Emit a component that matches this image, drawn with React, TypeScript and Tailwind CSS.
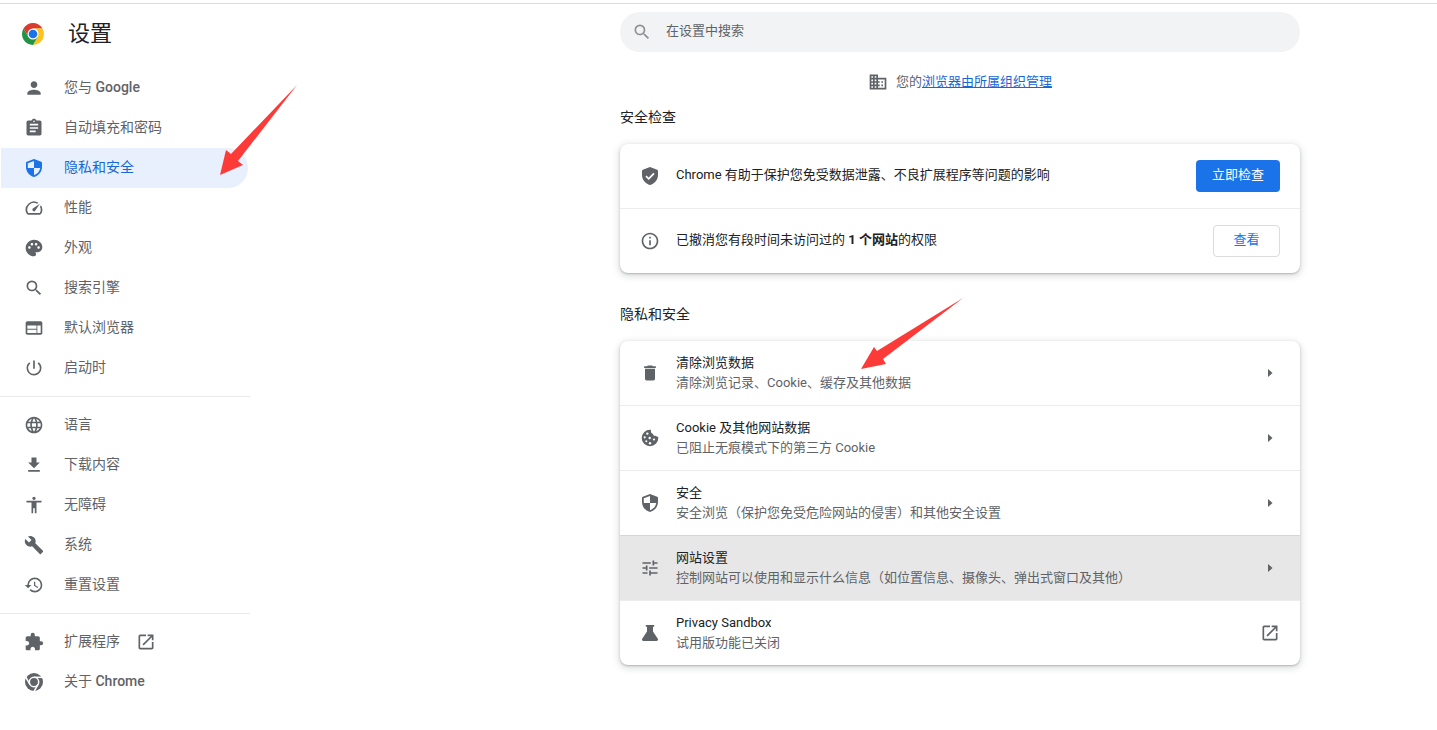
import type { ComponentType, ReactNode } from 'react';
import {
  MdAccessibility,
  MdAssignment,
  MdBuild,
  MdBusiness,
  MdDelete,
  MdExtension,
  MdFileDownload,
  MdHistory,
  MdInfoOutline,
  MdLanguage,
  MdOpenInNew,
  MdOutlineSpeed,
  MdPalette,
  MdPerson,
  MdPowerSettingsNew,
  MdSearch,
  MdTune,
  MdWeb,
} from 'react-icons/md';

type Icon = ComponentType<{ className?: string }>;

interface NavItem {
  label: ReactNode;
  icon: Icon;
  active?: boolean;
  external?: boolean;
}

interface PrivacyItem {
  title: string;
  description: string;
  icon: Icon;
  hovered?: boolean;
  external?: boolean;
}

function ShieldIcon({ className }: { className?: string }) {
  return (
    <svg viewBox="0 0 20 20" fill="currentColor" className={className} aria-hidden="true">
      <path
        fillRule="evenodd"
        d="M10 1 2.8 3.7c-.5.2-.8.6-.8 1.1V9c0 4.7 3.3 8.700 8 10 4.700-1.300 8-5.300 8-10V4.800c0-.5-.3-.9-.8-1.100L10 1zm0 1.900V10h6.200c-.4 3.300-2.800 6-6.200 7.200V10H3.800V5.200L10 2.900z"
      />
    </svg>
  );
}

function ShieldCheckIcon({ className }: { className?: string }) {
  return (
    <svg viewBox="0 0 20 20" className={className} aria-hidden="true">
      <path
        fill="currentColor"
        d="M10 1 2.800 3.700c-.5.2-.8.6-.8 1.100V9c0 4.700 3.300 8.700 8 10 4.700-1.300 8-5.300 8-10V4.800c0-.5-.3-.9-.8-1.100L10 1z"
      />
      <path d="m6 10.200 2.700 2.600L14 7.400" fill="none" stroke="#fff" strokeWidth="1.700" />
    </svg>
  );
}

function CookieIcon({ className }: { className?: string }) {
  return (
    <svg viewBox="0 0 20 20" className={className} aria-hidden="true">
      <path
        fill="currentColor"
        d="M10 1.700a8.300 8.300 0 1 0 8.300 8.300c0-.5 0-.9-.1-1.300-.9.200-1.900-.1-2.400-.9-1.400.4-2.700-.5-2.700-1.900-1.500-.3-2.600-1.700-2.100-3.200.1-.4 0-1-1-1z"
      />
      <g fill="#fff">
        <circle cx="7.300" cy="5.600" r="1.200" />
        <circle cx="4.700" cy="9.300" r="1.100" />
        <circle cx="9.700" cy="10" r="1.200" />
        <circle cx="6.300" cy="13.300" r="1" />
        <circle cx="14" cy="11.500" r="1.100" />
        <circle cx="10" cy="15.300" r="1.200" />
      </g>
    </svg>
  );
}

function FlaskIcon({ className }: { className?: string }) {
  return (
    <svg viewBox="0 0 20 20" fill="currentColor" className={className} aria-hidden="true">
      <path d="M5.800 2h8.400v1.800H13v4.700l4.800 7.300c.6 1-.1 2.200-1.200 2.200H3.400c-1.100 0-1.800-1.200-1.200-2.200L7 8.500V3.800H5.800V2z" />
    </svg>
  );
}

function ChromeIcon({ className }: { className?: string }) {
  return (
    <svg viewBox="0 0 20 20" className={className} aria-hidden="true">
      <circle cx="10" cy="10" r="9" fill="currentColor" />
      <circle cx="10" cy="10" r="4.700" fill="none" stroke="#fff" strokeWidth="1.500" />
      <g stroke="#fff" strokeWidth="1.500">
        <path d="M10 5.300h9" />
        <path d="M10 5.300h9" transform="rotate(120 10 10)" />
        <path d="M10 5.300h9" transform="rotate(240 10 10)" />
      </g>
    </svg>
  );
}

function ChromeLogo({ className }: { className?: string }) {
  return (
    <svg viewBox="2 2 44 44" className={className} aria-hidden="true">
      <path d="M4.950 13a22 22 0 0 1 38.100 0H24l-9.530 16.500z" fill="#db3a2f" />
      <path d="M43.050 13A22 22 0 0 1 24 46l9.530-16.500L24 13z" fill="#fcc31e" />
      <path d="M24 46A22 22 0 0 1 4.950 13l9.520 16.500h19.060z" fill="#229342" />
      <circle cx="24" cy="24" r="11" fill="#fff" />
      <circle cx="24" cy="24" r="8.700" fill="#1a73e8" />
    </svg>
  );
}

const primaryNav: NavItem[] = [
  { label: <>您与 <span className="font-medium">Google</span></>, icon: MdPerson },
  { label: '自动填充和密码', icon: MdAssignment },
  { label: '隐私和安全', icon: ShieldIcon, active: true },
  { label: '性能', icon: MdOutlineSpeed },
  { label: '外观', icon: MdPalette },
  { label: '搜索引擎', icon: MdSearch },
  { label: '默认浏览器', icon: MdWeb },
  { label: '启动时', icon: MdPowerSettingsNew },
];

const advancedNav: NavItem[] = [
  { label: '语言', icon: MdLanguage },
  { label: '下载内容', icon: MdFileDownload },
  { label: '无障碍', icon: MdAccessibility },
  { label: '系统', icon: MdBuild },
  { label: '重置设置', icon: MdHistory },
];

const aboutNav: NavItem[] = [
  { label: '扩展程序', icon: MdExtension, external: true },
  { label: <>关于 <span className="font-medium">Chrome</span></>, icon: ChromeIcon },
];

const privacyItems: PrivacyItem[] = [
  { title: '清除浏览数据', description: '清除浏览记录、Cookie、缓存及其他数据', icon: MdDelete },
  { title: 'Cookie 及其他网站数据', description: '已阻止无痕模式下的第三方 Cookie', icon: CookieIcon },
  { title: '安全', description: '安全浏览（保护您免受危险网站的侵害）和其他安全设置', icon: ShieldIcon },
  {
    title: '网站设置',
    description: '控制网站可以使用和显示什么信息（如位置信息、摄像头、弹出式窗口及其他）',
    icon: MdTune,
    hovered: true,
  },
  { title: 'Privacy Sandbox', description: '试用版功能已关闭', icon: FlaskIcon, external: true },
];

function NavGroup({ items }: { items: NavItem[] }) {
  return (
    <ul>
      {items.map(({ label, icon: ItemIcon, active, external }, i) => (
        <li key={i}>
          <a
            href="#"
            aria-current={active ? 'page' : undefined}
            className={`ml-px mr-0.5 flex h-10 items-center rounded-r-full pl-[23px] text-sm ${
              active ? 'bg-[#e8f0fe] text-[#1967d2]' : 'text-[#5f6368]'
            }`}
          >
            <ItemIcon className={`mr-5 size-5 shrink-0 ${active ? 'text-[#1a73e8]' : ''}`} />
            <span className="pb-0.5">{label}</span>
            {external && <MdOpenInNew className="ml-4 size-5" />}
          </a>
        </li>
      ))}
    </ul>
  );
}

function Card({ children }: { children: ReactNode }) {
  return (
    <div className="relative rounded-lg bg-white shadow-[0_1px_2px_rgba(60,64,67,0.3),0_2px_6px_2px_rgba(60,64,67,0.15)]">
      {children}
    </div>
  );
}

export default function App() {
  return (
    <div className="bg-white pt-[3px] font-[Roboto,'Noto_Sans_CJK_SC',sans-serif] text-[13px] leading-5 text-[#202124]">
      <div className="flex border-t border-[#dadce0]">
        <aside className="relative w-[250px] shrink-0">
          <header className="flex h-16 items-center gap-6 pb-1 pl-[22px]">
            <ChromeLogo className="size-[22px]" />
            <h1 className="text-[22px] leading-8">设置</h1>
          </header>
          <nav aria-label="设置">
            <NavGroup items={primaryNav} />
            <hr className="my-2 border-[#e8eaed]" />
            <NavGroup items={advancedNav} />
            <hr className="my-2 border-[#e8eaed]" />
            <NavGroup items={aboutNav} />
          </nav>
          <svg className="pointer-events-none absolute left-[220px] top-[81px] h-[90px] w-[77px]" viewBox="0 0 77 90" aria-hidden="true">
            <path d="M0 90 6 65l5 4L77 0 18 76l5 4z" fill="#fc3b39" />
          </svg>
        </aside>

        <main className="flex min-w-0 flex-1 justify-end pl-6 pr-[137px]">
          <div className="w-full max-w-[680px] pt-2">
            <label className="flex h-10 items-center rounded-full bg-[#f1f3f4] px-3">
              <MdSearch className="mr-3.5 size-5 shrink-0 text-[#8f9194]" />
              <input
                type="text"
                aria-label="在设置中搜索"
                placeholder="在设置中搜索"
                className="w-full bg-transparent pb-0.5 outline-none placeholder:text-[#5f6368]"
              />
            </label>

            <p className="flex items-center justify-center gap-2 pt-5 text-[#5f6368]">
              <MdBusiness className="size-5" />
              <span>
                您的
                <a href="#" className="text-[#1967d2] underline">浏览器由所属组织管理</a>
              </span>
            </p>

            <section>
              <h2 className="pb-[17px] pt-[15px] text-sm">安全检查</h2>
              <Card>
                <div className="flex h-16 items-center gap-4 px-5">
                  <ShieldCheckIcon className="size-5 shrink-0 text-[#5f6368]" />
                  <p className="flex-1 pb-0.5">Chrome 有助于保护您免受数据泄露、不良扩展程序等问题的影响</p>
                  <button className="h-8 rounded bg-[#1a73e8] px-4 pb-0.5 text-white">立即检查</button>
                </div>
                <div className="flex h-[65px] items-center gap-4 border-t border-[#ececec] px-5">
                  <MdInfoOutline className="size-5 shrink-0 text-[#5f6368]" />
                  <p className="flex-1 pb-0.5">
                    已撤消您有段时间未访问过的 <b className="font-bold">1 个网站</b>的权限
                  </p>
                  <button className="h-8 min-w-[67px] rounded border border-[#dadce0] px-4 pb-0.5 text-[#1a73e8]">查看</button>
                </div>
              </Card>
            </section>

            <section>
              <h2 className="pb-[17px] pt-[31px] text-sm">隐私和安全</h2>
              <Card>
                <ul>
                  {privacyItems.map(({ title, description, icon: ItemIcon, hovered, external }, i) => (
                    <li key={title} className={i > 0 ? (hovered ? 'border-t border-[#d6d6d6]' : 'border-t border-[#ececec]') : ''}>
                      <button
                        className={`flex h-16 w-full items-center gap-4 px-5 text-left ${hovered ? 'bg-[#e7e7e7]' : ''}`}
                      >
                        <ItemIcon className="size-5 shrink-0 text-[#5f6368]" />
                        <span className="min-w-0 flex-1">
                          <span className="block">{title}</span>
                          <span className="block text-[#5f6368]">{description}</span>
                        </span>
                        {external ? (
                          <MdOpenInNew className="size-5 text-[#5f6368]" />
                        ) : (
                          <svg viewBox="0 0 20 20" className="size-5 fill-[#5f6368]" aria-hidden="true">
                            <path d="M8 6v8l4.500-4z" />
                          </svg>
                        )}
                      </button>
                    </li>
                  ))}
                </ul>
                <svg
                  className="pointer-events-none absolute -top-[43px] left-[241px] h-[71px] w-[102px]"
                  viewBox="0 0 102 71"
                  aria-hidden="true"
                >
                  <path d="m0 71 13-22 3 4L102 0 22 61l3 5z" fill="#fc3b39" />
                </svg>
              </Card>
            </section>
          </div>
        </main>
      </div>
    </div>
  );
}
